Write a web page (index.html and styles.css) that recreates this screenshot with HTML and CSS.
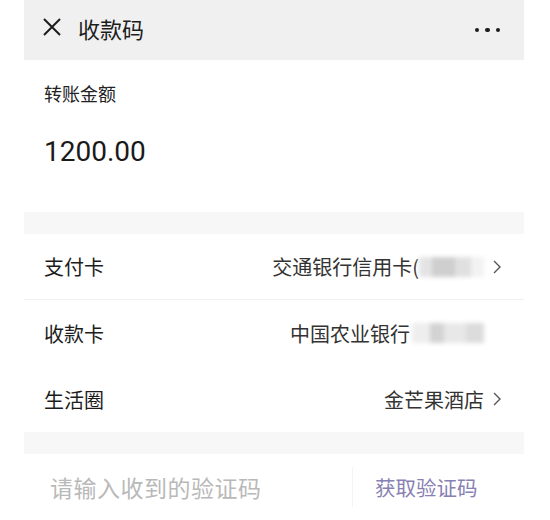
FILE: index.html
```html
<!DOCTYPE html>
<html lang="zh-CN">
<head>
<meta charset="utf-8">
<title>收款码</title>
<link rel="stylesheet" href="styles.css">
</head>
<body>
<div class="page">
  <header class="topbar">
    <svg class="close" width="20" height="20" viewBox="0 0 20 20"><path d="M2 2 L18 18 M18 2 L2 18" stroke="#1c1c1c" stroke-width="2" fill="none"/></svg>
    <span class="title">收款码</span>
    <span class="more"><i></i><i></i><i></i></span>
  </header>

  <section class="amount">
    <div class="amount-label">转账金额</div>
    <div class="amount-value">1200.00</div>
  </section>

  <div class="band"></div>

  <section class="list">
    <div class="row sep">
      <span class="label">支付卡</span>
      <span class="value">交通银行信用卡(<span class="blur blur-a"></span></span>
      <svg class="chev" width="10" height="16" viewBox="0 0 10 16"><path d="M2 2 L8 8 L2 14" stroke="#555" stroke-width="1.4" fill="none"/></svg>
    </div>
    <div class="row">
      <span class="label">收款卡</span>
      <span class="value">中国农业银行<span class="blur blur-b"></span></span>
      <svg class="chev hidden" width="10" height="16" viewBox="0 0 10 16"><path d="M2 2 L8 8 L2 14" stroke="#555" stroke-width="1.4" fill="none"/></svg>
    </div>
    <div class="row">
      <span class="label">生活圈</span>
      <span class="value">金芒果酒店</span>
      <svg class="chev" width="10" height="16" viewBox="0 0 10 16"><path d="M2 2 L8 8 L2 14" stroke="#555" stroke-width="1.4" fill="none"/></svg>
    </div>
  </section>

  <div class="band"></div>

  <section class="code-row">
    <span class="placeholder">请输入收到的验证码</span>
    <span class="divider"></span>
    <span class="get-code">获取验证码</span>
  </section>
</div>
</body>
</html>
```

FILE: styles.css
```css
* { box-sizing: border-box; }
html, body {
  margin: 0;
  padding: 0;
  background: #ffffff;
}
body {
  font-family: "Noto Sans CJK SC", "Noto Sans", sans-serif;
  color: #1a1a1a;
}
.page {
  width: 550px;
  height: 520px;
  padding: 0 26px 0 24px;
  overflow: hidden;
}
.topbar {
  height: 60px;
  background: #f0f0f0;
  display: flex;
  align-items: center;
  padding: 0 24px 0 18px;
}
.close { flex: none; margin-top: -6px; }
.title {
  font-size: 22px;
  line-height: 30px;
  margin-left: 16px;
  margin-top: -4px;
  color: #1c1c1c;
}
.more {
  margin-left: auto;
  display: flex;
  gap: 6px;
}
.more i {
  display: block;
  width: 4.5px;
  height: 4.5px;
  border-radius: 50%;
  background: #1c1c1c;
}
.amount {
  padding: 21px 20px 42px;
}
.amount-label {
  font-size: 18px;
  line-height: 24px;
  color: #222;
}
.amount-value {
  margin-top: 29px;
  font-family: Roboto, "Noto Sans", sans-serif;
  font-size: 28px;
  line-height: 36px;
  color: #1a1a1a;
}
.band {
  height: 22px;
  background: #f7f7f7;
}
.list { display: flex; flex-direction: column; }
.row {
  height: 66px;
  display: flex;
  align-items: center;
  padding: 0 22px 0 20px;
}
.row.sep { border-bottom: 1px solid #f1f1f1; }
.label {
  font-size: 20px;
  color: #1c1c1c;
}
.value {
  margin-left: auto;
  font-size: 20px;
  color: #333;
  display: flex;
  align-items: center;
}
.blur {
  display: inline-block;
  height: 20px;
  filter: blur(2px);
}
.blur-a {
  width: 65px;
  background: linear-gradient(90deg, #e4e4e4 0 20%, #cfcfcf 20% 55%, #e0e0e0 55% 80%, #f2f2f2 80%);
}
.blur-b {
  width: 72px;
  margin-left: 2px;
  background: linear-gradient(90deg, #eeeeee 0 25%, #d3d3d3 25% 45%, #e8e8e8 45% 75%, #dcdcdc 75%);
}
.chev { margin-left: 8px; flex: none; }
.chev.hidden { visibility: hidden; }
.code-row {
  height: 66px;
  display: flex;
  align-items: center;
  padding: 0 0 0 26px;
}
.placeholder {
  font-size: 23px;
  letter-spacing: 0.5px;
  color: #b9b9b9;
  width: 302px;
}
.divider {
  width: 1px;
  height: 40px;
  background: #f3f3f3;
}
.get-code {
  margin-left: 22px;
  font-size: 20.5px;
  color: #8780b3;
}
```
